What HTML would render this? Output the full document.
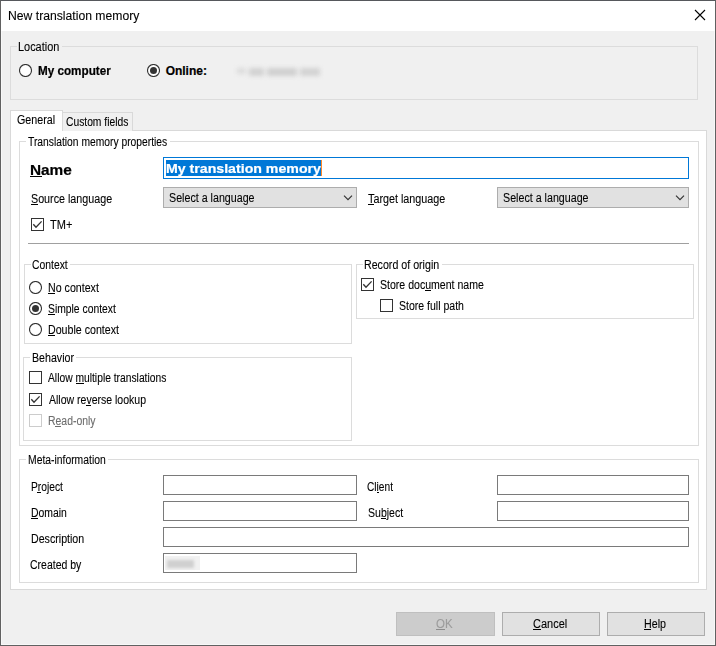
<!DOCTYPE html>
<html><head><meta charset="utf-8">
<style>
html,body{margin:0;padding:0;width:716px;height:646px;overflow:hidden;background:#f0f0f0;}
body{position:relative;font-family:"Liberation Sans",sans-serif;color:#000;}
div{box-sizing:border-box;}
.a{position:absolute;}
.t{position:absolute;white-space:pre;transform-origin:0 0;font-family:"Liberation Sans",sans-serif;-webkit-text-stroke:0.1px currentColor;}
.ul{position:absolute;height:1px;}
.gb{position:absolute;border:1px solid #dcdcdc;}
.inp{position:absolute;border:1px solid #7a7a7a;background:#fff;}
.sel{position:absolute;border:1px solid #adadad;background:#e1e1e1;}
.btn{position:absolute;border:1px solid #adadad;background:#e1e1e1;}
.rad{position:absolute;width:13px;height:13px;border:1px solid #333;border-radius:50%;background:#fff;}
.rad.on::after{content:"";position:absolute;left:2px;top:2px;width:7px;height:7px;border-radius:50%;background:#333;}
.chk{position:absolute;width:13px;height:13px;border:1px solid #333;background:#fff;}
.chk svg{position:absolute;left:-1px;top:-1px;}
.lbl{position:absolute;background:inherit;}
</style></head><body>
<!-- window frame -->
<div class="a" style="left:0;top:0;width:716px;height:646px;border:1px solid #616161;border-top-color:#56585c;"></div>
<div class="a" style="left:1px;top:1px;width:714px;height:30px;background:#fff;"></div>
<div class="a" style="left:1px;top:31px;width:1px;height:614px;background:#f8f8f8;"></div>
<div class="a" style="left:714px;top:31px;width:1px;height:614px;background:#f8f8f8;"></div>
<div class="a" style="left:1px;top:644px;width:714px;height:1px;background:#f8f8f8;"></div>
<svg class="a" style="left:694px;top:9px" width="12" height="12" viewBox="0 0 12 12"><path d="M1 1L11 11M11 1L1 11" stroke="#000" stroke-width="1.1" fill="none"/></svg>

<!-- Location group -->
<div class="gb" style="left:10px;top:46px;width:688px;height:54px;"></div>
<div class="a" style="left:17px;top:40px;width:45px;height:12px;background:#f0f0f0;"></div>
<svg class="a" style="left:19px;top:64px" width="13" height="13" viewBox="0 0 13 13"><circle cx="6.5" cy="6.5" r="6" fill="#fff" stroke="#333" stroke-width="1.1"/></svg>
<svg class="a" style="left:147px;top:64px" width="13" height="13" viewBox="0 0 13 13"><circle cx="6.5" cy="6.5" r="6" fill="#fff" stroke="#333" stroke-width="1.1"/><circle cx="6.5" cy="6.5" r="3.5" fill="#333"/></svg>
<!-- blurred online address -->
<div class="a" style="left:230px;top:62px;width:100px;height:19px;filter:blur(2.2px);">
  <div class="a" style="left:7px;top:6px;width:9px;height:6px;background:#dcdcdc;"></div>
  <div class="a" style="left:19px;top:5.5px;width:15px;height:8px;background:#d2d2d2;"></div>
  <div class="a" style="left:37px;top:5.5px;width:30px;height:8px;background:#d0d0d0;"></div>
  <div class="a" style="left:70px;top:5.5px;width:20px;height:8px;background:#d3d3d3;"></div>
</div>

<!-- tabs -->
<div class="a" style="left:10px;top:130px;width:697px;height:460px;border:1px solid #d9d9d9;background:#fff;"></div>
<div class="a" style="left:62px;top:112px;width:71px;height:19px;border:1px solid #d9d9d9;border-bottom:none;background:#f0f0f0;"></div>
<div class="a" style="left:10px;top:110px;width:53px;height:21px;border:1px solid #d9d9d9;border-bottom:none;background:#fff;"></div>

<!-- TM properties group -->
<div class="gb" style="left:19px;top:141px;width:680px;height:305px;"></div>
<div class="a" style="left:26px;top:135px;width:144px;height:12px;background:#fff;"></div>

<!-- name input -->
<div class="a" style="left:163px;top:157px;width:526px;height:22px;border:1px solid #0078d7;background:#fff;"></div>
<div class="a" style="left:166px;top:160px;width:155px;height:16px;background:#0078d7;"></div>
<div class="a" style="left:321px;top:160px;width:1px;height:16px;background:#ff8728;"></div>

<!-- selects -->
<div class="sel" style="left:163px;top:187px;width:194px;height:21px;"></div>
<svg class="a" style="left:343px;top:194px" width="11" height="8" viewBox="0 0 11 8"><path d="M1 1.7L5 5.7L9 1.7" stroke="#333" stroke-width="1.15" fill="none"/></svg>
<div class="sel" style="left:497px;top:187px;width:192px;height:21px;"></div>
<svg class="a" style="left:675px;top:194px" width="11" height="8" viewBox="0 0 11 8"><path d="M1 1.7L5 5.7L9 1.7" stroke="#333" stroke-width="1.15" fill="none"/></svg>

<!-- TM+ -->
<div class="chk" style="left:31px;top:218px;"><svg width="13" height="13" viewBox="0 0 13 13"><path d="M2.3 6.3L5 9.3L10.6 3.4" stroke="#333" stroke-width="1.35" fill="none"/></svg></div>

<!-- separator -->
<div class="a" style="left:28px;top:243px;width:661px;height:1px;background:#a0a0a0;"></div>

<!-- context group -->
<div class="gb" style="left:24px;top:264px;width:328px;height:80px;"></div>
<div class="a" style="left:31px;top:258px;width:39px;height:12px;background:#fff;"></div>
<svg class="a" style="left:29px;top:281px" width="13" height="13" viewBox="0 0 13 13"><circle cx="6.5" cy="6.5" r="6" fill="#fff" stroke="#333" stroke-width="1.1"/></svg>
<svg class="a" style="left:29px;top:302px" width="13" height="13" viewBox="0 0 13 13"><circle cx="6.5" cy="6.5" r="6" fill="#fff" stroke="#333" stroke-width="1.1"/><circle cx="6.5" cy="6.5" r="3.5" fill="#333"/></svg>
<svg class="a" style="left:29px;top:323px" width="13" height="13" viewBox="0 0 13 13"><circle cx="6.5" cy="6.5" r="6" fill="#fff" stroke="#333" stroke-width="1.1"/></svg>

<!-- record of origin -->
<div class="gb" style="left:356px;top:264px;width:338px;height:55px;"></div>
<div class="a" style="left:363px;top:258px;width:79px;height:12px;background:#fff;"></div>
<div class="chk" style="left:361px;top:278px;"><svg width="13" height="13" viewBox="0 0 13 13"><path d="M2.3 6.3L5 9.3L10.6 3.4" stroke="#333" stroke-width="1.35" fill="none"/></svg></div>
<div class="chk" style="left:380px;top:299px;"></div>

<!-- behavior -->
<div class="gb" style="left:23px;top:357px;width:329px;height:84px;"></div>
<div class="a" style="left:30px;top:351px;width:46px;height:12px;background:#fff;"></div>
<div class="chk" style="left:29px;top:371px;"></div>
<div class="chk" style="left:29px;top:393px;"><svg width="13" height="13" viewBox="0 0 13 13"><path d="M2.3 6.3L5 9.3L10.6 3.4" stroke="#333" stroke-width="1.35" fill="none"/></svg></div>
<div class="chk" style="left:29px;top:414px;border-color:#cccccc;"></div>

<!-- meta information -->
<div class="gb" style="left:19px;top:459px;width:680px;height:124px;"></div>
<div class="a" style="left:26px;top:453px;width:82px;height:12px;background:#fff;"></div>
<div class="inp" style="left:163px;top:475px;width:194px;height:20px;"></div>
<div class="inp" style="left:497px;top:475px;width:192px;height:20px;"></div>
<div class="inp" style="left:163px;top:501px;width:194px;height:20px;"></div>
<div class="inp" style="left:497px;top:501px;width:192px;height:20px;"></div>
<div class="inp" style="left:163px;top:527px;width:526px;height:20px;"></div>
<div class="inp" style="left:163px;top:553px;width:194px;height:20px;"></div>
<div class="a" style="left:165px;top:556px;width:35px;height:14px;background:#f1f1f1;"></div>
<div class="a" style="left:167px;top:560px;width:27px;height:8px;background:#d0d0d0;filter:blur(1.6px);"></div>

<!-- buttons -->
<div class="btn" style="left:396px;top:612px;width:99px;height:24px;background:#cccccc;border-color:#bfbfbf;"></div>
<div class="btn" style="left:502px;top:612px;width:98px;height:24px;"></div>
<div class="btn" style="left:607px;top:612px;width:98px;height:24px;"></div>

<div class="t" id="t0" style="left:8.32px;top:10px;font-size:12px;line-height:12px;transform:scaleX(1.0153);">New translation memory</div>
<div class="t" id="t1" style="left:18.30px;top:41px;font-size:12px;line-height:12px;transform:scaleX(0.9107);">Location</div>
<div class="t" id="t2" style="left:37.89px;top:65px;font-size:12px;line-height:12px;font-weight:bold;-webkit-text-stroke:0.2px currentColor;transform:scaleX(0.9740);">My computer</div>
<div class="t" id="t3" style="left:165.63px;top:65px;font-size:12px;line-height:12px;font-weight:bold;-webkit-text-stroke:0.2px currentColor;">Online:</div>
<div class="t" id="t4" style="left:17.13px;top:114px;font-size:12px;line-height:12px;transform:scaleX(0.8937);">General</div>
<div class="t" id="t5" style="left:66.46px;top:116px;font-size:12px;line-height:12px;transform:scaleX(0.8570);">Custom fields</div>
<div class="t" id="t6" style="left:28.21px;top:136px;font-size:12px;line-height:12px;transform:scaleX(0.8576);">Translation memory properties</div>
<div class="t" id="t7" style="left:30.47px;top:163px;font-size:14px;line-height:14px;font-weight:bold;-webkit-text-stroke:0.2px currentColor;transform:scaleX(1.0965);">Name</div>
<div class="ul" style="left:30px;top:176px;width:12px;background:#000"></div>
<div class="t" id="t8" style="left:166.49px;top:163px;font-size:12px;line-height:12px;font-weight:bold;-webkit-text-stroke:0.2px currentColor;color:#fff;transform:scaleX(1.1791);">My translation memory</div>
<div class="t" id="t9" style="left:30.62px;top:193px;font-size:12px;line-height:12px;transform:scaleX(0.8942);">Source language</div>
<div class="ul" style="left:31px;top:204px;width:7px;background:#000"></div>
<div class="t" id="t10" style="left:169.35px;top:192px;font-size:12px;line-height:12px;transform:scaleX(0.8906);">Select a language</div>
<div class="t" id="t11" style="left:367.53px;top:193px;font-size:12px;line-height:12px;transform:scaleX(0.8989);">Target language</div>
<div class="ul" style="left:368px;top:204px;width:6px;background:#000"></div>
<div class="t" id="t12" style="left:503.40px;top:192px;font-size:12px;line-height:12px;transform:scaleX(0.8906);">Select a language</div>
<div class="t" id="t13" style="left:49.80px;top:219px;font-size:12px;line-height:12px;transform:scaleX(0.9181);">TM+</div>
<div class="t" id="t14" style="left:32.26px;top:259px;font-size:12px;line-height:12px;transform:scaleX(0.8639);">Context</div>
<div class="t" id="t15" style="left:47.53px;top:282px;font-size:12px;line-height:12px;transform:scaleX(0.8867);">No context</div>
<div class="ul" style="left:48px;top:293px;width:7px;background:#000"></div>
<div class="t" id="t16" style="left:47.75px;top:303px;font-size:12px;line-height:12px;transform:scaleX(0.8623);">Simple context</div>
<div class="ul" style="left:48px;top:314px;width:7px;background:#000"></div>
<div class="t" id="t17" style="left:47.52px;top:324px;font-size:12px;line-height:12px;transform:scaleX(0.8870);">Double context</div>
<div class="ul" style="left:48px;top:335px;width:7px;background:#000"></div>
<div class="t" id="t18" style="left:364.26px;top:259px;font-size:12px;line-height:12px;transform:scaleX(0.8875);">Record of origin</div>
<div class="t" id="t19" style="left:379.66px;top:279px;font-size:12px;line-height:12px;transform:scaleX(0.8794);">Store document name</div>
<div class="ul" style="left:425px;top:290px;width:6px;background:#000"></div>
<div class="t" id="t20" style="left:398.66px;top:300px;font-size:12px;line-height:12px;transform:scaleX(0.8773);">Store full path</div>
<div class="t" id="t21" style="left:31.67px;top:352px;font-size:12px;line-height:12px;transform:scaleX(0.8858);">Behavior</div>
<div class="t" id="t22" style="left:48.11px;top:372px;font-size:12px;line-height:12px;transform:scaleX(0.8572);">Allow multiple translations</div>
<div class="ul" style="left:76px;top:383px;width:8px;background:#000"></div>
<div class="t" id="t23" style="left:48.56px;top:394px;font-size:12px;line-height:12px;transform:scaleX(0.8763);">Allow reverse lookup</div>
<div class="ul" style="left:86px;top:405px;width:5px;background:#000"></div>
<div class="t" id="t24" style="left:47.66px;top:415px;font-size:12px;line-height:12px;color:#6d6d6d;transform:scaleX(0.8692);">Read-only</div>
<div class="ul" style="left:55px;top:426px;width:6px;background:#6d6d6d"></div>
<div class="t" id="t25" style="left:27.54px;top:454px;font-size:12px;line-height:12px;transform:scaleX(0.8630);">Meta-information</div>
<div class="t" id="t26" style="left:30.65px;top:481px;font-size:12px;line-height:12px;transform:scaleX(0.8541);">Project</div>
<div class="ul" style="left:37px;top:492px;width:4px;background:#000"></div>
<div class="t" id="t27" style="left:30.51px;top:507px;font-size:12px;line-height:12px;transform:scaleX(0.8681);">Domain</div>
<div class="ul" style="left:31px;top:518px;width:7px;background:#000"></div>
<div class="t" id="t28" style="left:30.87px;top:533px;font-size:12px;line-height:12px;transform:scaleX(0.8864);">Description</div>
<div class="t" id="t29" style="left:30.26px;top:559px;font-size:12px;line-height:12px;transform:scaleX(0.8739);">Created by</div>
<div class="t" id="t30" style="left:367.12px;top:481px;font-size:12px;line-height:12px;transform:scaleX(0.8470);">Client</div>
<div class="ul" style="left:377px;top:492px;width:2px;background:#000"></div>
<div class="t" id="t31" style="left:367.67px;top:507px;font-size:12px;line-height:12px;transform:scaleX(0.8772);">Subject</div>
<div class="ul" style="left:381px;top:518px;width:5px;background:#000"></div>
<div class="t" id="t32" style="left:436.35px;top:618px;font-size:12px;line-height:12px;color:#9c9c9c;transform:scaleX(0.9571);">OK</div>
<div class="ul" style="left:436px;top:629px;width:9px;background:#8c8c8c"></div>
<div class="t" id="t33" style="left:532.88px;top:618px;font-size:12px;line-height:12px;transform:scaleX(0.9161);">Cancel</div>
<div class="ul" style="left:533px;top:629px;width:8px;background:#000"></div>
<div class="t" id="t34" style="left:643.54px;top:618px;font-size:12px;line-height:12px;transform:scaleX(0.8913);">Help</div>
<div class="ul" style="left:644px;top:629px;width:7px;background:#000"></div>
</body></html>
